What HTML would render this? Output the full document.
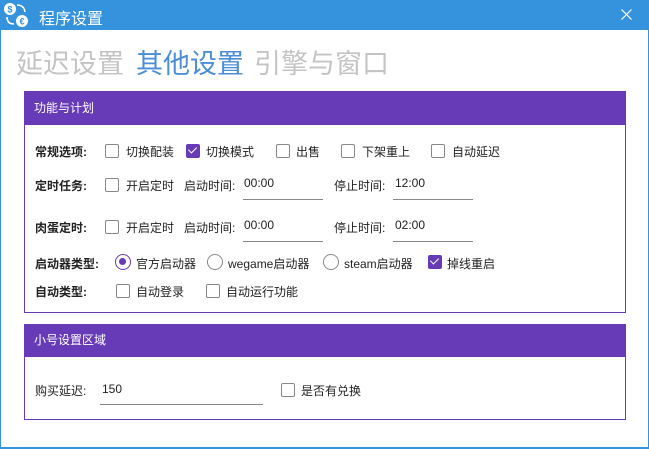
<!DOCTYPE html>
<html><head><meta charset="utf-8"><style>
*{margin:0;padding:0;box-sizing:border-box}
body{width:649px;height:449px;overflow:hidden;background:#fff;font-family:"Liberation Sans","Noto Sans CJK SC",sans-serif;font-size:12px;color:#222;position:relative}
.a{position:absolute;white-space:nowrap}
.title{left:0;top:0;width:649px;height:30px;background:#3592dc}
.cb{position:absolute;width:14px;height:14px;border:1.5px solid #888;border-radius:2px;background:#fff}
.cb.on{background:#673ab7;border-color:#673ab7}
.cb.on:after{content:"";position:absolute;left:3px;top:0px;width:4px;height:7px;border:solid #fff;border-width:0 1.5px 1.5px 0;transform:rotate(45deg)}
.rb{position:absolute;width:16px;height:16px;border:1.5px solid #888;border-radius:50%;background:#fff}
.rb.on{border-color:#673ab7}
.rb.on:after{content:"";position:absolute;left:3px;top:3px;width:7px;height:7px;border-radius:50%;background:#673ab7}
.lb{font-weight:bold}
.ul{position:absolute;height:1px;background:#888}
.grp{position:absolute;border:1px solid #673ab7}
.hd{position:absolute;background:#673ab7;color:#fff;font-size:12px;padding-left:10px}
.h{position:absolute;top:42px;font-size:27px;color:#c4c4c4;white-space:nowrap}
</style></head><body>
<div class="a title"></div>
<svg class="a" style="left:2px;top:1px" width="28" height="28" viewBox="0 0 28 28">
<circle cx="8" cy="8" r="6" fill="#fff"/><text x="8" y="11.5" font-size="9" font-weight="bold" text-anchor="middle" fill="#3592dc" font-family="Liberation Sans">$</text>
<circle cx="20" cy="20" r="6" fill="#fff"/><text x="20" y="23.5" font-size="9" font-weight="bold" text-anchor="middle" fill="#3592dc" font-family="Liberation Sans">€</text>
<path d="M15 4 Q22 4 23 11" stroke="#fff" stroke-width="1.6" fill="none"/><path d="M5 16 Q5 23 12 23" stroke="#fff" stroke-width="1.6" fill="none"/>
</svg>
<div class="a" style="left:39px;top:5px;color:#fff;font-size:16px">程序设置</div>
<svg class="a" style="left:621px;top:9px" width="11" height="11" viewBox="0 0 11 11"><path d="M0.5 0.5L10.5 10.5M10.5 0.5L0.5 10.5" stroke="#fff" stroke-width="1.2"/></svg>
<div class="a" style="left:0;top:30px;width:1px;height:419px;background:#3592dc"></div>
<div class="a" style="left:648px;top:30px;width:1px;height:419px;background:#3592dc"></div>
<div class="a" style="left:0;top:447px;width:649px;height:2px;background:#3592dc"></div>
<div class="h" style="left:16px">延迟设置</div>
<div class="h" style="left:136px;color:#4a8ed8">其他设置</div>
<div class="h" style="left:254px">引擎与窗口</div>

<div class="grp" style="left:24px;top:91px;width:602px;height:222px"></div>
<div class="hd" style="left:24px;top:91px;width:602px;height:34px;line-height:34px">功能与计划</div>
<div class="a lb" style="left:35px;top:143px">常规选项:</div>
<div class="cb" style="left:105px;top:144px"></div><div class="a" style="left:126px;top:143px">切换配装</div>
<div class="cb on" style="left:186px;top:144px"></div><div class="a" style="left:206px;top:143px">切换模式</div>
<div class="cb" style="left:276px;top:144px"></div><div class="a" style="left:296px;top:143px">出售</div>
<div class="cb" style="left:341px;top:144px"></div><div class="a" style="left:362px;top:143px">下架重上</div>
<div class="cb" style="left:431px;top:144px"></div><div class="a" style="left:452px;top:143px">自动延迟</div>

<div class="a lb" style="left:35px;top:177px">定时任务:</div>
<div class="cb" style="left:105px;top:178px"></div><div class="a" style="left:126px;top:177px">开启定时</div>
<div class="a" style="left:184px;top:177px">启动时间:</div><div class="a" style="left:244px;top:176px">00:00</div>
<div class="ul" style="left:243px;top:199px;width:80px"></div>
<div class="a" style="left:334px;top:177px">停止时间:</div><div class="a" style="left:395px;top:176px">12:00</div>
<div class="ul" style="left:393px;top:199px;width:80px"></div>

<div class="a lb" style="left:35px;top:219px">肉蛋定时:</div>
<div class="cb" style="left:105px;top:220px"></div><div class="a" style="left:126px;top:219px">开启定时</div>
<div class="a" style="left:184px;top:219px">启动时间:</div><div class="a" style="left:244px;top:218px">00:00</div>
<div class="ul" style="left:243px;top:241px;width:80px"></div>
<div class="a" style="left:334px;top:219px">停止时间:</div><div class="a" style="left:395px;top:218px">02:00</div>
<div class="ul" style="left:393px;top:241px;width:80px"></div>

<div class="a lb" style="left:35px;top:255px">启动器类型:</div>
<div class="rb on" style="left:115px;top:254px"></div><div class="a" style="left:136px;top:255px">官方启动器</div>
<div class="rb" style="left:207px;top:254px"></div><div class="a" style="left:228px;top:255px">wegame启动器</div>
<div class="rb" style="left:323px;top:254px"></div><div class="a" style="left:344px;top:255px">steam启动器</div>
<div class="cb on" style="left:428px;top:255px"></div><div class="a" style="left:447px;top:255px">掉线重启</div>

<div class="a lb" style="left:35px;top:283px">自动类型:</div>
<div class="cb" style="left:116px;top:284px"></div><div class="a" style="left:136px;top:283px">自动登录</div>
<div class="cb" style="left:206px;top:284px"></div><div class="a" style="left:226px;top:283px">自动运行功能</div>

<div class="grp" style="left:24px;top:324px;width:602px;height:96px"></div>
<div class="hd" style="left:24px;top:324px;width:602px;height:33px;line-height:33px">小号设置区域</div>
<div class="a" style="left:35px;top:382px">购买延迟:</div><div class="a" style="left:102px;top:382px">150</div>
<div class="ul" style="left:100px;top:404px;width:163px"></div>
<div class="cb" style="left:281px;top:383px"></div><div class="a" style="left:301px;top:382px">是否有兑换</div>
</body></html>
